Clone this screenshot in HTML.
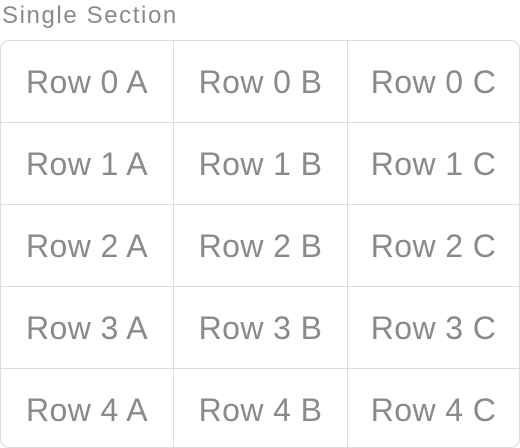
<!DOCTYPE html><html><head><style>
body{margin:0;width:520px;height:448px;background:#fff;font-family:"Liberation Sans",sans-serif;overflow:hidden}
.h{position:absolute;left:2px;top:2px;font-size:24px;line-height:28px;color:#8a8a8e;letter-spacing:1.6px}
.t{position:absolute;left:0;top:40px;width:518px;height:406px;border:1px solid #dcdcdc;border-radius:9px;overflow:hidden}
.r{display:flex;height:81px;border-bottom:1px solid #dcdcdc}
.r:last-child{border-bottom:none}
.c{width:173px;display:flex;align-items:center;justify-content:center;font-size:32px;letter-spacing:0.4px;color:#8a8a8e;border-right:1px solid #dcdcdc;padding-top:2px;box-sizing:border-box}
.c:nth-child(2){width:174px}
.c:last-child{border-right:none;flex:1}
</style></head><body>
<div class="h">Single Section</div>
<div class="t">
<div class="r"><div class="c">Row 0 A</div><div class="c">Row 0 B</div><div class="c">Row 0 C</div></div>
<div class="r"><div class="c">Row 1 A</div><div class="c">Row 1 B</div><div class="c">Row 1 C</div></div>
<div class="r"><div class="c">Row 2 A</div><div class="c">Row 2 B</div><div class="c">Row 2 C</div></div>
<div class="r"><div class="c">Row 3 A</div><div class="c">Row 3 B</div><div class="c">Row 3 C</div></div>
<div class="r"><div class="c">Row 4 A</div><div class="c">Row 4 B</div><div class="c">Row 4 C</div></div>
</div>
</body></html>
